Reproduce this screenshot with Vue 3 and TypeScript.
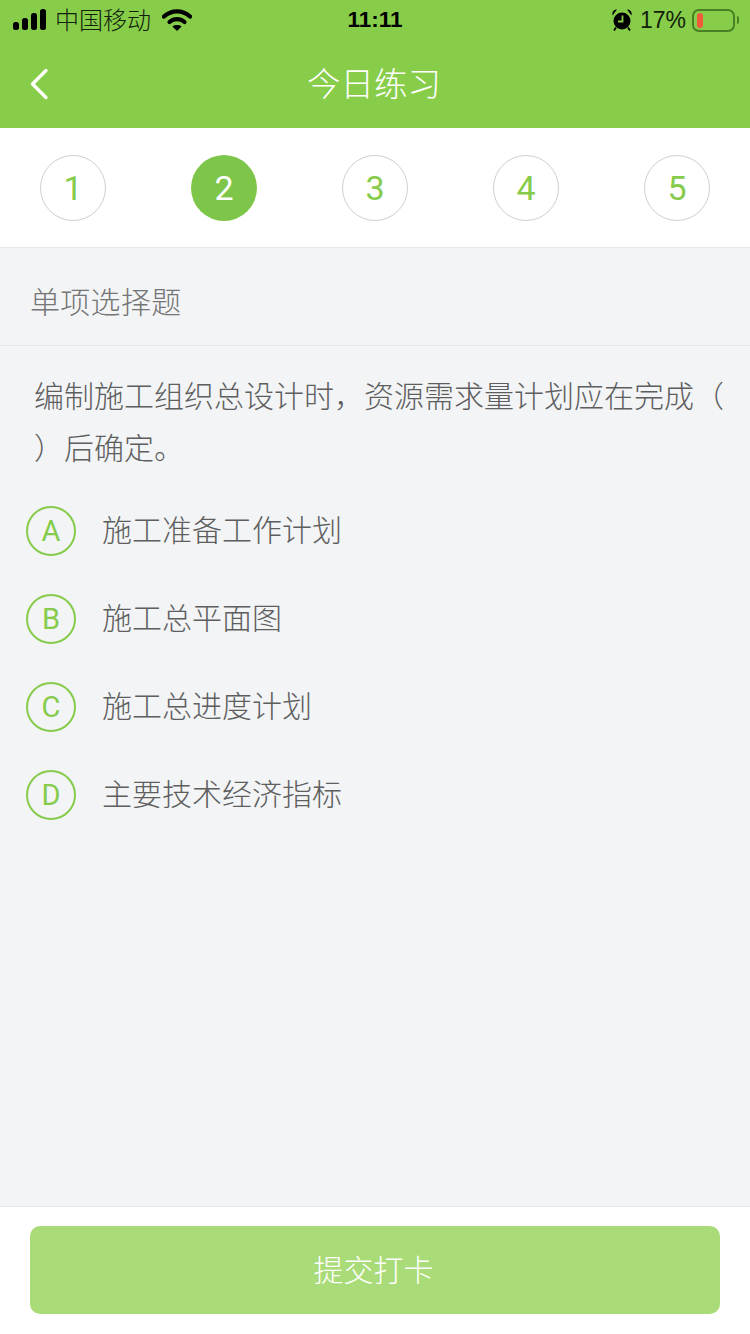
<template>
  <div class="page">
    <header class="top">
      <div class="status">
        <div class="status-left">
          <svg class="signal" width="33" height="22" viewBox="0 0 33 22">
            <rect x="0" y="13" width="6" height="8" rx="2.500" />
            <rect x="9" y="9" width="6" height="12" rx="2.500" />
            <rect x="18" y="4" width="6" height="17" rx="2.500" />
            <rect x="27" y="0" width="6" height="21" rx="2.500" />
          </svg>
          <span class="carrier">中国移动</span>
          <svg class="wifi" width="30" height="22" viewBox="0 0 30 22">
            <path d="M2 7.500C9.500.6 20.500.6 28 7.500" fill="none" stroke="#000" stroke-width="4.400" stroke-linecap="round" />
            <path d="M7.500 13c4.400-3.900 10.600-3.900 15 0" fill="none" stroke="#000" stroke-width="4.200" stroke-linecap="round" />
            <path d="M10.400 17.400c2.700-1.900 6.500-1.900 9.200 0L15 22z" />
          </svg>
        </div>
        <span class="time">11:11</span>
        <div class="status-right">
          <svg class="alarm" width="20" height="22" viewBox="0 0 20 22">
            <circle cx="10" cy="12" r="8.500" />
            <path d="M.6 6.500C-.4 3 1.800.4 5 .6zM19.400 6.500c1-3.500-1.200-6.100-4.400-5.900z" />
            <path d="M4 18.500l-2 3M16 18.500l2 3" stroke="#000" stroke-width="1.800" />
            <path d="M10.500 6.500v6H6" fill="none" stroke="#87cd4a" stroke-width="1.800" />
          </svg>
          <span class="percent">17%</span>
          <div class="battery">
            <div class="battery-level"></div>
          </div>
          <div class="battery-tip"></div>
        </div>
      </div>
      <div class="nav">
        <svg class="back" width="20" height="32" viewBox="0 0 20 32">
          <path d="M17 2.500 3.500 16 17 29.500" fill="none" stroke="#fff" stroke-width="3.400" stroke-linecap="round" stroke-linejoin="round" />
        </svg>
        <h1 class="nav-title">今日练习</h1>
      </div>
    </header>

    <div class="steps">
      <span v-for="n in steps" :key="n" class="step" :class="{ active: n === current }">{{ n }}</span>
    </div>

    <main class="content">
      <div class="type">单项选择题</div>
      <p class="question">编制施工组织总设计时，资源需求量计划应在完成（ ）后确定。</p>
      <ul class="options">
        <li v-for="option in options" :key="option.key" class="option">
          <span class="option-key">{{ option.key }}</span>
          <span class="option-text">{{ option.text }}</span>
        </li>
      </ul>
    </main>

    <footer class="footer">
      <button class="submit" type="button">提交打卡</button>
    </footer>
  </div>
</template>

<script setup lang="ts">
const steps: number[] = [1, 2, 3, 4, 5];
const current = 2;

const options = [
  { key: 'A', text: '施工准备工作计划' },
  { key: 'B', text: '施工总平面图' },
  { key: 'C', text: '施工总进度计划' },
  { key: 'D', text: '主要技术经济指标' },
];
</script>

<style>
body {
  margin: 0;
}
</style>

<style scoped>
.page {
  width: 750px;
  height: 1334px;
  display: flex;
  flex-direction: column;
  overflow: hidden;
  background: #f2f4f6;
  font-family: "Liberation Sans", "Noto Sans CJK SC", sans-serif;
}

.top {
  height: 128px;
  background: #87cd4a;
  flex-shrink: 0;
}

.status {
  height: 40px;
  padding: 0 11px 0 13px;
  display: flex;
  align-items: center;
  justify-content: space-between;
  color: #000;
  font-size: 23px;
  position: relative;
}

.status-left,
.status-right {
  display: flex;
  align-items: center;
}

.signal {
  margin-right: 9px;
}

.carrier {
  font-family: "Noto Sans CJK SC", sans-serif;
  font-size: 24px;
  font-weight: 300;
  line-height: 40px;
  color: #10200a;
  padding-bottom: 2px;
}

.wifi {
  margin-left: 11px;
}

.time {
  position: absolute;
  left: 0;
  right: 0;
  text-align: center;
  font-size: 22.500px;
  font-weight: 700;
  line-height: 42px;
}

.alarm {
  margin-right: 8px;
}

.percent {
  margin-right: 6px;
  line-height: 40px;
  color: #13200a;
}

.battery {
  width: 43px;
  height: 23px;
  box-sizing: border-box;
  padding: 2px;
  border: 2px solid #4a8024;
  border-radius: 7px;
}

.battery-level {
  width: 6px;
  height: 15px;
  margin-left: 1px;
  border-radius: 3px;
  background: #f0593a;
}

.battery-tip {
  width: 2px;
  height: 8px;
  margin-left: 2px;
  border-radius: 0 2px 2px 0;
  background: #4a8024;
}

.nav {
  height: 88px;
  position: relative;
  display: flex;
  align-items: center;
  justify-content: center;
}

.back {
  position: absolute;
  left: 29px;
  top: 28px;
}

.nav-title {
  margin: 0 2px 4px 0;
  font-family: "Noto Sans CJK SC", sans-serif;
  font-size: 33.500px;
  font-weight: 300;
  line-height: 84px;
  color: #fff;
}

.steps {
  height: 119px;
  padding: 0 40px;
  display: flex;
  align-items: center;
  justify-content: space-between;
  background: #fff;
  border-bottom: 1px solid #e6e7e8;
  flex-shrink: 0;
}

.step {
  width: 66px;
  height: 66px;
  box-sizing: border-box;
  border: 1px solid #cfcfcf;
  border-radius: 50%;
  display: flex;
  align-items: center;
  justify-content: center;
  font-family: Roboto, sans-serif;
  font-size: 34px;
  color: #86cb4b;
}

.step.active {
  border: none;
  background: #7dc649;
  color: #fff;
}

.content {
  flex: 1;
}

.type {
  height: 98px;
  padding-left: 30px;
  box-sizing: border-box;
  border-bottom: 1px solid #e6e7e8;
  font-family: "Noto Sans CJK SC", sans-serif;
  font-size: 30px;
  font-weight: 300;
  letter-spacing: 0.3px;
  line-height: 104px;
  color: #757575;
  overflow: hidden;
}

.question {
  margin: 0;
  padding: 22px 25px 0 34px;
  font-family: "Noto Sans CJK SC", sans-serif;
  font-size: 30px;
  font-weight: 300;
  line-height: 52px;
  color: #5e5e5e;
}

.options {
  list-style: none;
  margin: 0;
  padding: 15px 0 0 26px;
}

.option {
  height: 88px;
  display: flex;
  align-items: center;
}

.option-key {
  width: 50px;
  height: 50px;
  box-sizing: border-box;
  border: 2px solid #86cb4b;
  border-radius: 50%;
  margin-right: 26px;
  display: flex;
  align-items: center;
  justify-content: center;
  font-family: Roboto, sans-serif;
  font-size: 29px;
  color: #86cb4b;
}

.option-text {
  font-family: "Noto Sans CJK SC", sans-serif;
  font-size: 30px;
  font-weight: 300;
  color: #5e5e5e;
  padding-bottom: 6px;
}

.footer {
  height: 128px;
  box-sizing: border-box;
  padding: 19px 30px 0;
  background: #fff;
  border-top: 1px solid #e8eaec;
  flex-shrink: 0;
}

.submit {
  display: block;
  width: 690px;
  height: 88px;
  padding: 0 3px 5px 0;
  border: none;
  border-radius: 10px;
  background: #a9dc78;
  font-family: "Noto Sans CJK SC", sans-serif;
  font-size: 30px;
  font-weight: 300;
  color: #fff;
}
</style>
